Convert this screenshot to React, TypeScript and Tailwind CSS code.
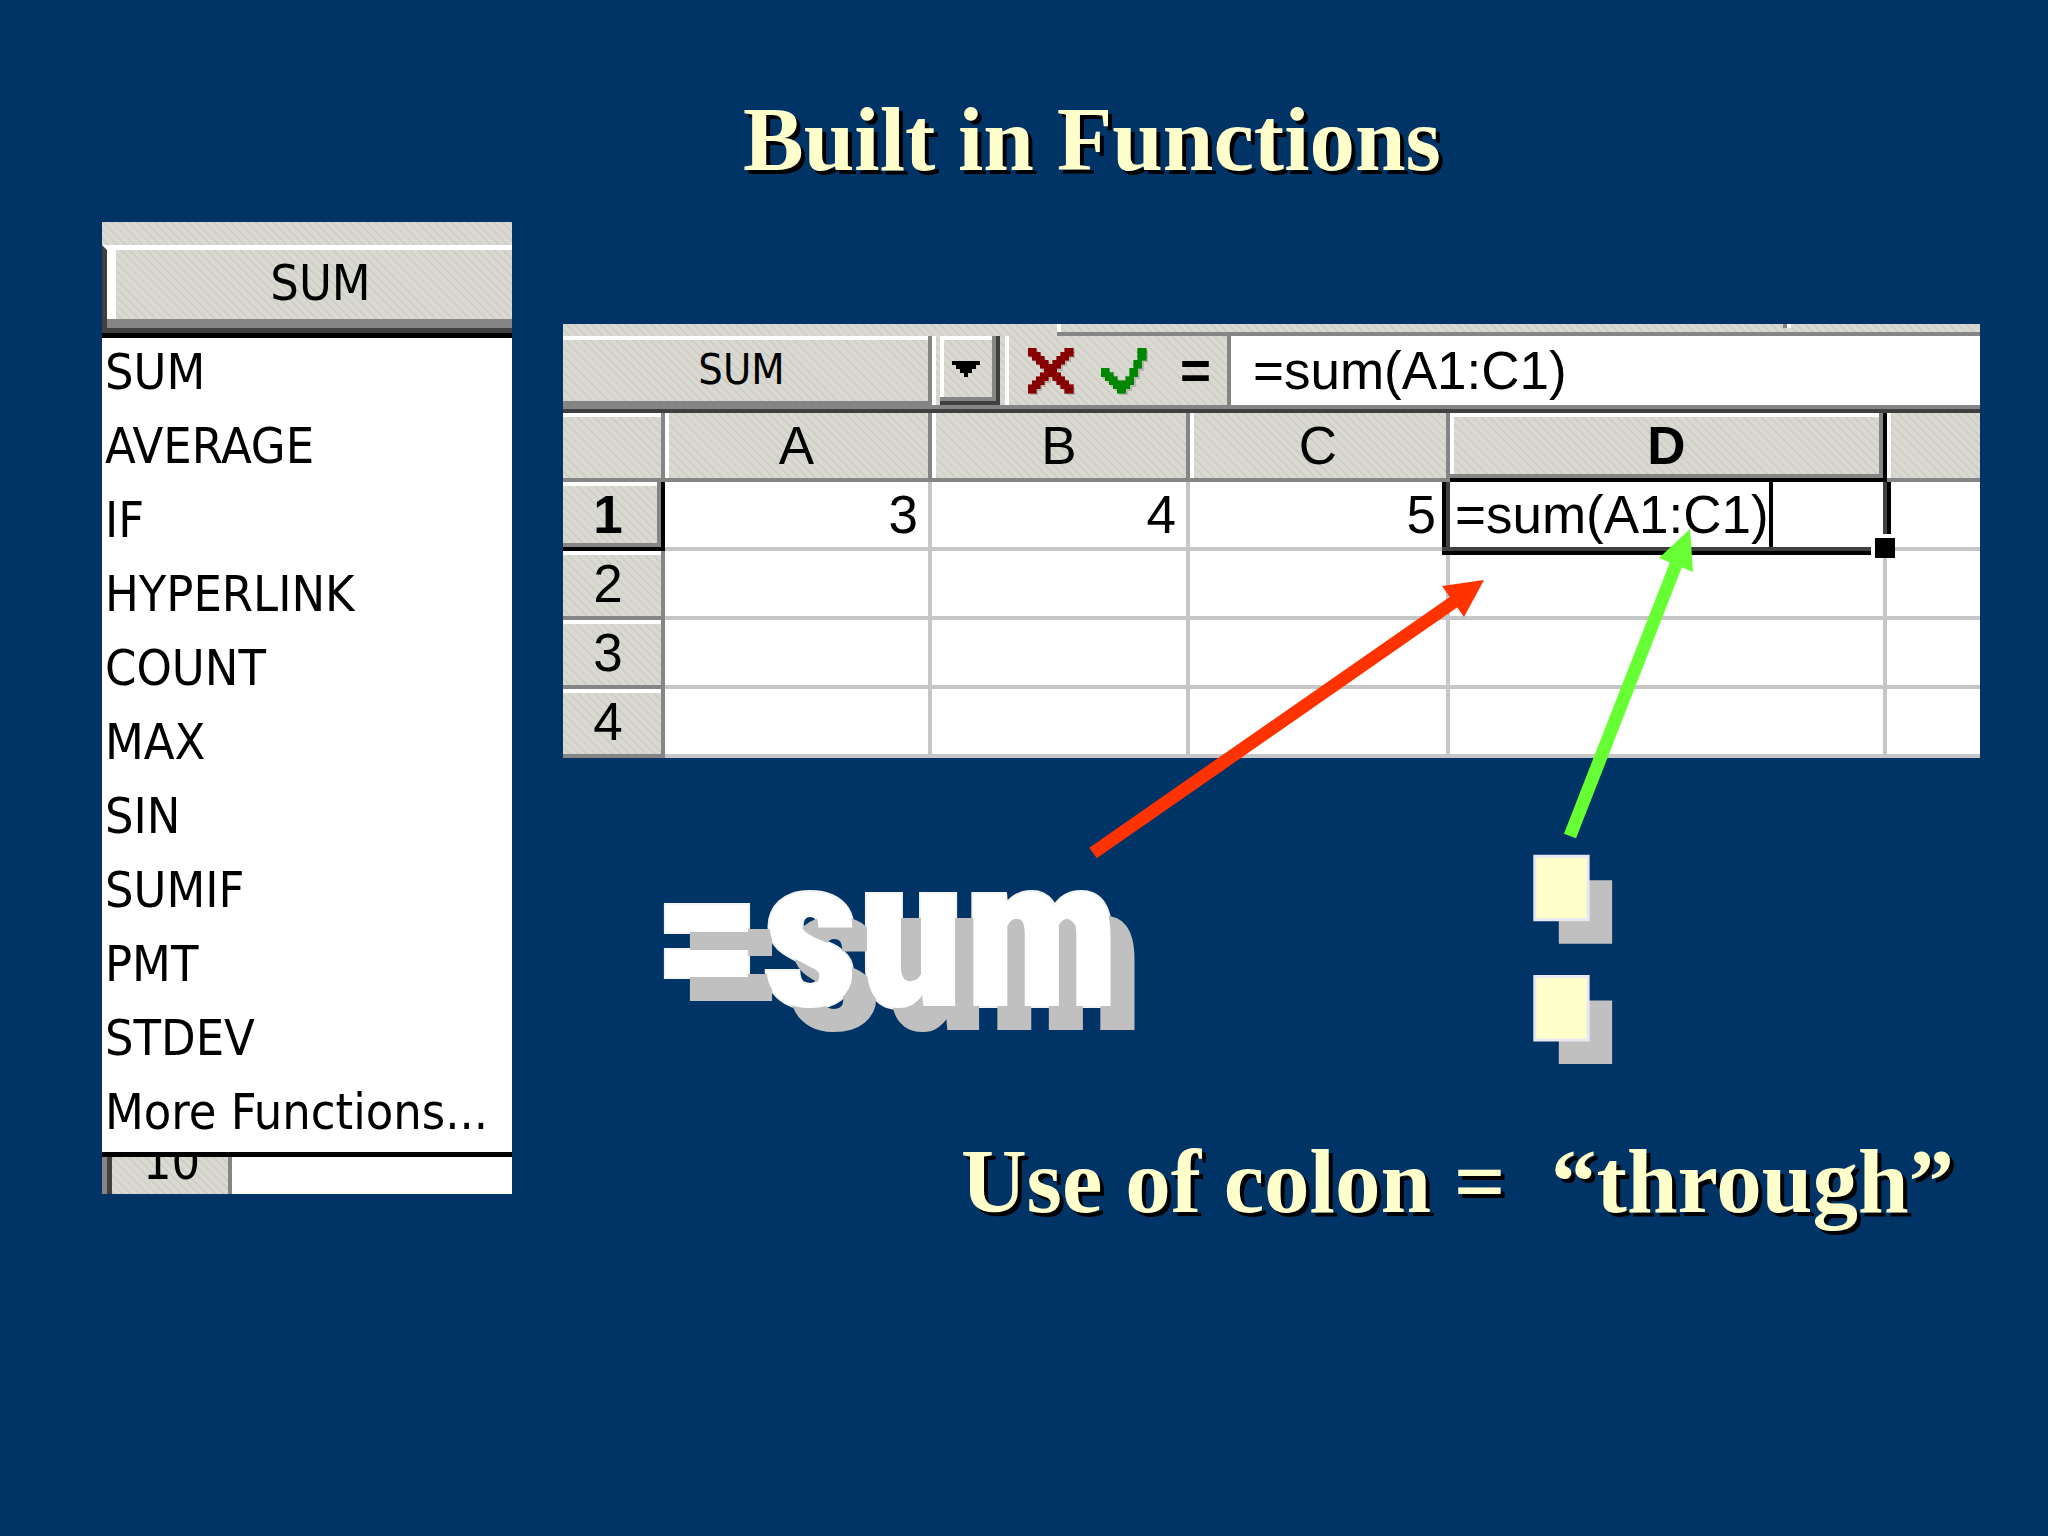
const functionNames = [
  'SUM',
  'AVERAGE',
  'IF',
  'HYPERLINK',
  'COUNT',
  'MAX',
  'SIN',
  'SUMIF',
  'PMT',
  'STDEV',
  'More Functions...',
];

const rows = [
  { id: '1', a: '3', b: '4', c: '5' },
  { id: '2', a: '', b: '', c: '' },
  { id: '3', a: '', b: '', c: '' },
  { id: '4', a: '', b: '', c: '' },
];

const texture = 'bg-[repeating-linear-gradient(45deg,#d9d9d2_0_4px,#cfcfc8_4px_6px)]';
const tahoma = "font-['DejaVu_Sans_Condensed','Noto_Sans',sans-serif]";
const arial = "font-['Liberation_Sans',Arial,sans-serif]";
const times = "font-['Liberation_Serif','Times_New_Roman',serif]";

// [column, row, width] runs on an 11x11 grid
const crossRuns = [
  [0, 0, 2], [9, 0, 2], [0, 1, 3], [8, 1, 3], [1, 2, 3], [7, 2, 3], [2, 3, 3], [6, 3, 3],
  [3, 4, 5], [4, 5, 3], [3, 6, 5], [2, 7, 3], [6, 7, 3], [1, 8, 3], [7, 8, 3], [0, 9, 3], [8, 9, 3],
  [0, 10, 2], [9, 10, 2],
];
const checkRuns = [
  [9, 0, 2], [9, 1, 2], [9, 2, 2], [8, 3, 2], [8, 4, 2], [0, 5, 2], [7, 5, 2], [0, 6, 3], [7, 6, 2],
  [1, 7, 3], [6, 7, 2], [2, 8, 6], [3, 9, 4], [4, 10, 2],
];

function PixelIcon({ runs, color }: { runs: number[][]; color: string }) {
  return (
    <svg viewBox="0 0 11 11" className="w-[45px] h-[45px] overflow-visible" shapeRendering="crispEdges" aria-hidden="true">
      {runs.map(([x, y, w]) => (
        <rect key={`s${x}-${y}`} x={x + 0.5} y={y + 0.5} width={w} height={1} fill="#b4b4b0" />
      ))}
      {runs.map(([x, y, w]) => (
        <rect key={`${x}-${y}`} x={x} y={y} width={w} height={1} fill={color} stroke={color} strokeWidth={0.15} />
      ))}
    </svg>
  );
}

function FunctionList() {
  return (
    <aside className={`${tahoma} w-[410px] shrink-0 bg-white text-black text-[50px]`}>
      <div className={`${texture} h-[23px]`}></div>
      <button
        type="button"
        className={`${texture} block w-full h-[88px] pl-[22px] pb-[11px] border-t-[5px] border-l-[5px] border-b-[5px] border-t-white border-l-[#404040] border-b-[#404040] shadow-[inset_0_-9px_0_#858585,inset_9px_0_0_#fff] leading-[67px] text-center`}
      >
        SUM
      </button>
      <ul className="border-y-[5px] border-black">
        {functionNames.map((name) => (
          <li key={name}>
            <button type="button" className="block w-full h-[74px] pl-[3px] pb-[6px] leading-[68px] text-left whitespace-nowrap">
              {name}
            </button>
          </li>
        ))}
      </ul>
      <div className="flex h-[37px] overflow-hidden">
        <div className={`${texture} w-[130px] pl-2 border-l-[5px] border-r-4 border-[#858585] shadow-[inset_5px_0_0_#404040]`}>
          <div className="leading-[10px] text-center">10</div>
        </div>
      </div>
    </aside>
  );
}

function FormulaBar() {
  return (
    <div className={texture}>
      <div className="flex h-3">
        <div className="w-[494px]"></div>
        <div className="w-[726px] shadow-[inset_0_-4px_0_#858585,inset_4px_0_0_#fff]"></div>
        <div className="flex-1 border-b-4 border-[#858585]">
          <div className="w-2 h-1 bg-white border-l-4 border-[#858585]"></div>
        </div>
      </div>
      <div className="flex h-[77px] border-b-4 border-[#404040] shadow-[inset_0_-4px_0_#858585]">
        <input
          aria-label="Name box"
          readOnly
          value="SUM"
          className={`${tahoma} w-[369px] h-[69px] pb-1 pr-3 text-[43px] text-center outline-none shadow-[inset_-4px_-4px_0_#858585,inset_0_4px_0_#fff]`}
        />
        <div className="w-1 h-[69px] bg-white"></div>
        <button
          type="button"
          aria-label="Open name list"
          className="flex items-center justify-center ml-1 pr-1 w-[60px] h-[69px] border-r-4 border-b-4 border-[#404040] shadow-[inset_-4px_-4px_0_#858585,inset_4px_4px_0_#fff]"
        >
          <svg viewBox="0 0 7 4" className="w-7 h-4" shapeRendering="crispEdges" aria-hidden="true">
            <path d="M0 0h7v1h-1v1h-1v1h-1v1h-1v-1h-1v-1h-1v-1h-1z" />
          </svg>
        </button>
        <div className="ml-[5px] w-1 h-[69px] bg-white"></div>
        <button type="button" aria-label="Cancel" className="ml-[19px] h-[69px]">
          <PixelIcon runs={crossRuns} color="#860000" />
        </button>
        <button type="button" aria-label="Enter" className="ml-7 h-[69px]">
          <PixelIcon runs={checkRuns} color="#008600" />
        </button>
        <button type="button" className={`${arial} ml-[34px] mr-4 w-[31px] h-[69px] text-[53px] leading-[69px] font-bold`}>
          =
        </button>
        <input
          aria-label="Formula"
          defaultValue="=sum(A1:C1)"
          className={`${arial} flex-1 min-w-0 h-[69px] pl-[22px] border-l-4 border-[#858585] bg-white text-[53px] outline-none`}
        />
      </div>
    </div>
  );
}

function Sheet() {
  const colHead = `${texture} h-[69px] p-0 font-normal border-r-4 border-b-4 border-[#858585]`;
  const cell = 'h-[69px] p-0 pr-[10px] text-right bg-white border-r-4 border-b-4 border-[#c6c6c6]';
  return (
    <table className={`${arial} w-full table-fixed border-separate border-spacing-0 text-[53px] leading-[65px] text-black`}>
      <colgroup>
        <col className="w-[102px]" />
        <col className="w-[267px]" />
        <col className="w-[258px]" />
        <col className="w-[260px]" />
        <col className="w-[437px]" />
        <col />
      </colgroup>
      <thead>
        <tr>
          <td className={`${colHead} shadow-[inset_0_4px_0_#fff]`}></td>
          <th scope="col" className={`${colHead} shadow-[inset_4px_0_0_#fff]`}>A</th>
          <th scope="col" className={`${colHead} shadow-[inset_4px_0_0_#fff]`}>B</th>
          <th scope="col" className={`${colHead} shadow-[inset_4px_0_0_#fff]`}>C</th>
          <th
            scope="col"
            className={`${texture} h-[69px] p-0 font-bold border-r-4 border-b-4 border-black shadow-[inset_-4px_-4px_0_#858585,inset_4px_4px_0_#fff]`}
          >
            D
          </th>
          <td className={`${texture} border-b-4 border-[#858585] shadow-[inset_4px_0_0_#fff]`}></td>
        </tr>
      </thead>
      <tbody>
        {rows.map((row, i) => (
          <tr key={row.id}>
            <th
              scope="row"
              className={
                i === 0
                  ? `${texture} h-[69px] p-0 pr-2 font-bold border-r-4 border-b-4 border-black shadow-[inset_-4px_-4px_0_#858585,inset_0_4px_0_#fff]`
                  : `${texture} h-[69px] p-0 pr-2 font-normal border-r-4 border-b-4 border-[#858585] shadow-[inset_0_4px_0_#fff]`
              }
            >
              {row.id}
            </th>
            <td className={cell}>{row.a}</td>
            <td className={cell}>{row.b}</td>
            <td className={cell}>{row.c}</td>
            {i === 0 ? (
              <td className="relative h-[69px] p-0 bg-white border-r-4 border-b-4 border-[#c6c6c6]">
                <input
                  aria-label="Cell D1"
                  defaultValue="=sum(A1:C1)"
                  className="block w-[323px] h-[65px] pl-[5px] border-r-4 border-black outline-none"
                />
                {/* selection frame and fill handle */}
                <div className="absolute top-0 -left-2 w-2 h-[73px] bg-black border-r-4 border-[#404040]"></div>
                <div className="absolute top-[65px] -left-2 right-3 h-2 bg-black border-t-4 border-[#404040]"></div>
                <div className="absolute top-0 -right-2 w-2 h-[52px] bg-black border-l-4 border-[#404040]"></div>
                <div className="absolute top-[52px] -right-3 w-6 h-6 bg-black border-l-4 border-t-4 border-white"></div>
              </td>
            ) : (
              <td className={cell}></td>
            )}
            <td className="bg-white border-b-4 border-[#c6c6c6]"></td>
          </tr>
        ))}
      </tbody>
    </table>
  );
}

export default function App() {
  return (
    <main className="min-h-screen bg-[#003366] pt-[88px] pl-[102px] pr-[68px]">
      <h1 className={`${times} pl-[102px] text-center text-[91px] leading-[104px] font-bold text-[#ffffcc] [text-shadow:4px_4px_0_#000]`}>
        Built in Functions
      </h1>

      <div className="flex items-start gap-[51px] mt-[30px]">
        <FunctionList />

        <section className="relative flex-1 min-w-0 pt-[102px]">
          <FormulaBar />
          <Sheet />

          <div className="flex items-start">
            <div className="mt-[76px] ml-[90px] w-[848px] font-['Roboto_Condensed',Roboto,sans-serif] text-[212px] leading-[200px] font-black text-white [-webkit-text-stroke:4px_#f4f4f4] [paint-order:stroke_fill] [text-shadow:24px_24px_0_#c0c0c0]">
              =sum
            </div>
            <div className="mt-[66px] font-['DejaVu_Sans_Condensed','DejaVu_Sans',sans-serif] text-[336px] leading-[200px] font-bold text-[#ffffcc] [-webkit-text-stroke:3px_#e8e8f0] [text-shadow:24px_24px_0_#c0c0c0]">
              :
            </div>
          </div>

          <p className={`${times} mt-[96px] pr-[26px] text-right whitespace-pre text-[91px] leading-[104px] font-bold text-[#ffffcc] [text-shadow:4px_4px_0_#000]`}>
            {'Use of colon =  “through”'}
          </p>

          {/* arrows from the labels up to the formula in D1 */}
          <svg viewBox="0 0 1417 980" className="absolute top-0 left-0 w-[1417px] h-[980px] pointer-events-none" aria-hidden="true">
            <path d="M530 631L895 377" stroke="#ff3300" strokeWidth="13" />
            <path d="M921 358L879 364L901 395z" fill="#ff3300" />
            <path d="M1007 614L1114 340" stroke="#66ff33" strokeWidth="13" />
            <path d="M1127 307L1096 336L1130 350z" fill="#66ff33" />
          </svg>
        </section>
      </div>
    </main>
  );
}
